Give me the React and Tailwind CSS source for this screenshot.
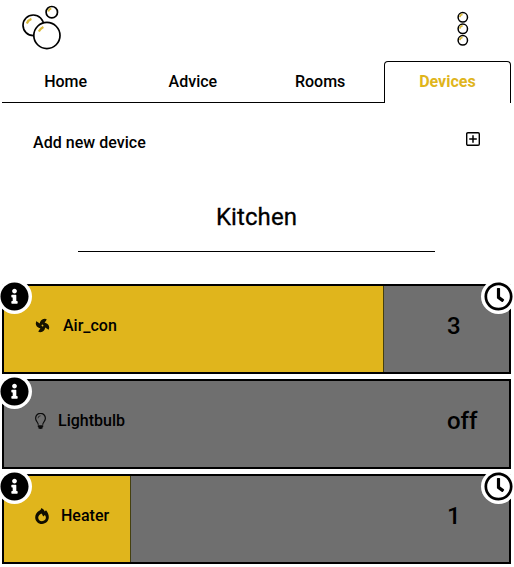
import { FaFan, FaInfoCircle, FaRegClock } from "react-icons/fa";

const TABS = ["Home", "Advice", "Rooms", "Devices"];

const DEVICES = [
  { name: "Air_con", level: 75, value: "3", timer: true, icon: FanIcon, label: "ml-[13px]" },
  { name: "Lightbulb", level: 0, value: "off", timer: false, icon: BulbIcon, label: "ml-[12px]" },
  { name: "Heater", level: 25, value: "1", timer: true, icon: FlameIcon, label: "ml-[12px]" },
];

function Logo() {
  return (
    <svg width="42" height="48" viewBox="0 0 42 48" fill="none" stroke="#000" strokeWidth="1.7">
      <circle cx="13.3" cy="22.3" r="10.3" fill="#fff" />
      <path d="M6.8 20.5a7.8 7.8 0 0 1 4.6-4.6" stroke="#d9b93c" strokeWidth="2.2" />
      <circle cx="26.9" cy="32.5" r="13.1" fill="#fff" />
      <path d="M18.8 28.5a9.5 9.5 0 0 1 4.6-4.6" stroke="#d9b93c" strokeWidth="2.2" />
      <circle cx="31.8" cy="9.2" r="5.7" fill="#fff" />
      <path d="M28.3 8.5a4 4 0 0 1 3-3" stroke="#d9b93c" strokeWidth="1.8" />
    </svg>
  );
}

function MenuIcon() {
  return (
    <svg width="12" height="36" viewBox="0 0 12 36" fill="none" stroke="#000" strokeWidth="1.5">
      {[6.3, 17.8, 29.3].map((y) => (
        <g key={y}>
          <circle cx="5.8" cy={y} r="4.7" />
          <path d={`M2.9 ${y - 0.2}a3 3 0 0 1 2.7-2.8`} stroke="#d9b93c" strokeWidth="1.7" />
        </g>
      ))}
    </svg>
  );
}

function AddIcon() {
  return (
    <svg width="14" height="14" viewBox="0 0 14 14" fill="none" stroke="#000" strokeWidth="1.4">
      <rect x="0.7" y="0.7" width="12.6" height="12.6" rx="1.2" />
      <path d="M7 3.2v7.6M3.2 7h7.6" strokeWidth="1.5" />
    </svg>
  );
}

function FanIcon() {
  return <FaFan size={15} color="#171300" className="rotate-[28deg]" />;
}

function BulbIcon() {
  return (
    <svg width="11" height="16" viewBox="0 0 11 16" fill="none" stroke="#0c0c0c" strokeWidth="1.2">
      <path d="M3.3 11.7C3.2 9.5.6 8.2.6 5.2a4.9 4.9 0 0 1 9.8 0c0 3-2.6 4.3-2.7 6.5" />
      <path d="M3 5.3a2.5 2.5 0 0 1 2.5-2.5" strokeWidth="0.7" />
      <path d="M2.8 13.2h5.4M3.4 14.5h4.2" strokeWidth="1.8" />
      <path d="M4.4 15.5h2.2" />
    </svg>
  );
}

function FlameIcon() {
  return (
    <svg width="14" height="16" viewBox="0 0 14 16" fill="#100d00">
      <path
        fillRule="evenodd"
        d="M6.4 0C8.1.8 9.2 2 9.8 3.4L11 2.3C12.7 4.3 13.8 6.7 13.8 9.1C13.8 13 10.8 16 7 16C3.1 16 .2 13 .2 9.2C.2 6.5 2 4.3 3.8 3.1C5.2 2.2 6.2 1.3 6.4 0ZM6.2 5.4C5.2 6.3 3.2 7.3 3.2 9.5C3.2 11.7 4.8 13.2 7 13.2C9.4 13.2 10.9 11.7 10.9 9.6C10.9 8.6 10.5 7.7 9.9 7L8.2 8.6C7.8 7.2 7.2 6.1 6.2 5.4Z"
      />
    </svg>
  );
}

function Device({ name, level, value, timer, icon: Icon, label }) {
  return (
    <section className="relative h-[90px] border-2 border-black bg-[#6f6f6f]">
      {level > 0 && (
        <div
          className="absolute inset-y-0 left-0 box-content border-r border-[#45400f] bg-[#e0b51c]"
          style={{ width: `${level}%` }}
        />
      )}
      <div className="relative flex h-full items-center pl-[31px]">
        <div className="-mt-[7px]">
          <Icon />
        </div>
        <span className={`${label} -mt-[7px] text-base leading-5 font-medium`}>{name}</span>
        <span className="absolute left-[443px] top-[26px] text-2xl leading-7 font-medium">{value}</span>
      </div>
      <div className="absolute -left-[7px] -top-[7px] rounded-full bg-white p-[3px]">
        <FaInfoCircle size={29} />
      </div>
      {timer && (
        <div className="absolute -right-[7px] -top-[7px] rounded-full bg-white p-[3px]">
          <FaRegClock size={29} />
        </div>
      )}
    </section>
  );
}

export default function App() {
  return (
    <div className="h-[567px] w-[514px] overflow-hidden bg-white pl-[2px] pr-[3px] font-['Roboto',sans-serif] text-black">
      <header className="flex h-[61px] items-start justify-between pl-[18px] pr-[42px]">
        <div className="pt-[3px]">
          <Logo />
        </div>
        <div className="pt-[11px]">
          <MenuIcon />
        </div>
      </header>
      <nav className="grid h-[42px] grid-cols-4">
        {TABS.map((tab) => (
          <a
            key={tab}
            className={
              tab === "Devices"
                ? "flex items-center justify-center rounded-t border border-b-0 border-black pb-px text-base font-bold text-[#e0b51c]"
                : "flex items-center justify-center border-b border-black pt-px text-base font-medium"
            }
          >
            {tab}
          </a>
        ))}
      </nav>
      <main>
        <div className="flex h-[80px] items-center justify-between pl-[31px] pr-[31px]">
          <span className="text-base font-medium tracking-[0.03px]">Add new device</span>
          <div className="-mt-[9px]">
            <AddIcon />
          </div>
        </div>
        <h1 className="mx-[76px] flex h-[69px] items-center justify-center border-b border-black text-2xl tracking-[0.1px] [-webkit-text-stroke:0.3px_black]">
          Kitchen
        </h1>
        <div className="mt-8 flex flex-col gap-[5px]">
          {DEVICES.map((device) => (
            <Device key={device.name} {...device} />
          ))}
        </div>
      </main>
    </div>
  );
}
